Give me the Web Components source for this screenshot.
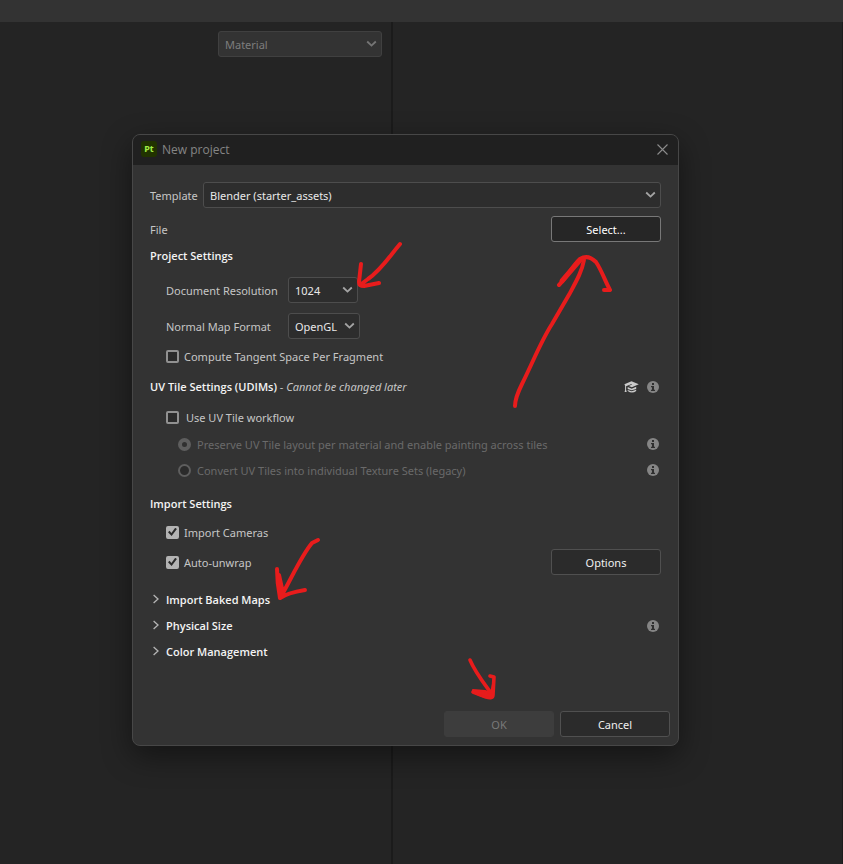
<!DOCTYPE html>
<html lang="en">
<head>
<meta charset="utf-8">
<title>New project</title>
<style>
  html, body { margin: 0; min-height: 100vh; background: #242424; }
  body { font: 11px/16px "Noto Sans", "Open Sans", sans-serif; color: #c6c6c6; }
</style>
</head>
<body>
<app-window></app-window>

<script>
const define = (name, html, setup) => {
  const template = document.createElement('template');
  template.innerHTML = '<style>*{box-sizing:border-box}</style>' + html;
  customElements.define(name, class extends HTMLElement {
    connectedCallback() {
      if (this.shadowRoot) return;
      this.attachShadow({ mode: 'open' }).append(template.content.cloneNode(true));
      if (setup) setup(this, this.shadowRoot);
    }
  });
};

define('ui-select', `
  <style>
    :host { display: flex; align-items: center; min-width: 0; }
    label { flex: none; width: var(--label-width, auto); margin-right: var(--label-gap, 0); padding-top: 2px; white-space: nowrap; }
    label:empty { display: none; }
    .box { position: relative; display: flex; flex: 1; height: 26px; max-width: var(--box-width, none); }
    select { appearance: none; width: 100%; height: 26px; margin: 0; padding: 2px 20px 0 6px; font: inherit;
      color: var(--field-color, #e8e8e8); background: var(--field-bg, #2d2d2d);
      border: 1px solid var(--field-border, #4d4d4d); border-radius: 3px; opacity: 1; }
    svg { position: absolute; right: 5px; top: 7px; width: 11px; height: 11px; pointer-events: none;
      fill: none; stroke: var(--arrow, #a4a4a4); stroke-width: 1.8; }
  </style>
  <label for="s"></label>
  <span class="box"><select id="s"><option></option></select>
    <svg viewBox="0 0 11 11"><path d="M1.2 3.5 5.5 7.6 9.8 3.5"/></svg></span>
`, (host, root) => {
  root.querySelector('label').textContent = host.getAttribute('label') || '';
  root.querySelector('option').textContent = host.getAttribute('value');
  const select = root.querySelector('select');
  select.disabled = host.hasAttribute('disabled');
  if (!host.hasAttribute('label')) select.setAttribute('aria-label', 'Display mode');
});

define('ui-button', `
  <style>
    :host { display: block; flex: none; width: 110px; }
    button { display: block; width: 100%; height: 26px; margin: 0; padding: 2px 0 0; font: inherit; color: #efefef;
      background: #2b2b2b; border: 1px solid #505050; border-radius: 3px; }
    :host([primary]) button { background: #262626; border-color: #787878; color: #fff; }
    button:disabled { background: #3d3d3d; border-color: #3d3d3d; color: #797979; }
  </style>
  <button type="button"><slot></slot></button>
`, (host, root) => { root.querySelector('button').disabled = host.hasAttribute('disabled'); });

define('ui-check', `
  <style>
    :host { display: flex; align-items: center; height: 26px; padding-left: 16px; }
    :host([type=radio]) { padding-left: 28px; color: #6a6a6a; }
    input { appearance: none; flex: none; display: grid; place-items: center; width: 13px; height: 13px;
      margin: 0 5px 0 0; border: 2px solid #919191; border-radius: 2px; background: #2b2b2b; }
    label { padding-top: 2px; }
    :host([wide]) input { margin-right: 7px; }
    input:checked { background: #b3b3b3; border-color: #b3b3b3; }
    input[type=checkbox]:checked::before { content: ""; width: 9px; height: 9px; background: #2b2b2b;
      clip-path: polygon(0 52%, 17% 36%, 38% 60%, 80% 2%, 99% 16%, 40% 94%); }
    input[type=radio] { margin-right: 6px; border-color: #5e5e5e; border-radius: 50%; }
    input[type=radio]:checked { border-width: 4px; background: #303030; }
  </style>
  <input id="i"><label for="i"><slot></slot></label>
`, (host, root) => {
  const input = root.querySelector('input');
  input.type = host.getAttribute('type') || 'checkbox';
  input.checked = host.hasAttribute('checked');
  input.disabled = host.hasAttribute('disabled');
});

define('ui-row', `
  <style>
    :host { display: flex; align-items: center; min-height: 26px; }
    .lead { flex: 1; min-width: 0; }
    .tail { display: flex; align-items: center; gap: 8px; }
    ::slotted(icon-info) { margin: 0 2px 1px 0; }
    ::slotted(icon-learn) { margin-bottom: 1px; }
  </style>
  <div class="lead"><slot></slot></div><div class="tail"><slot name="end"></slot></div>
`);

define('ui-heading', `
  <style>
    :host { display: block; }
    h2 { margin: 0; font: inherit; line-height: 28px; white-space: nowrap; }
    b { font-family: "Open Sans", "Noto Sans", sans-serif; font-weight: 600; color: #f4f4f4; }
  </style>
  <h2><b><slot></slot></b><slot name="note"></slot></h2>
`);

define('ui-disclosure', `
  <style>
    :host { display: block; }
    button { display: flex; align-items: center; gap: 6px; height: 26px; margin: 0; padding: 0; border: 0;
      background: none; font: inherit; font-family: "Open Sans", "Noto Sans", sans-serif; font-weight: 600; color: #f4f4f4; }
    svg { width: 10px; height: 10px; margin-bottom: 2px; fill: none; stroke: #b4b4b4; stroke-width: 1.3; }
  </style>
  <button type="button" aria-expanded="false"><svg viewBox="0 0 10 10"><path d="M3.6 1 8 5 3.6 9"/></svg><slot></slot></button>
`);

define('icon-info', `
  <style>:host,svg{display:block;width:12px;height:12px}</style>
  <svg viewBox="0 0 12 12" role="img" aria-label="Information"><circle cx="6" cy="6" r="6" fill="#858585"/>
    <path fill="#2f2f2f" d="M5 2h2v2H5zM4 5h3v3.7h1V10H4V8.7h1V6.2H4z"/></svg>
`);

define('icon-learn', `
  <style>:host,svg{display:block;width:15px;height:12px}</style>
  <svg viewBox="0 0 15 12" role="img" aria-label="Tutorials" fill="#cbcbcb">
    <path d="M7.5.2 14.8 3.3 7.8 6.3 4.8 5 8 3.6 7.6 2.9 2.6 4.9 2.1 5.2V8.8L2.7 11H.6L1.1 8.8V4.7L.4 3.3z"/>
    <path d="M3.7 6 7.7 7.7 12.2 5.7V8L7.7 9.3 3.7 8zM3.7 9 7.7 10.2 12.2 8.8V10Q8 13 3.7 10z"/></svg>
`);

define('project-dialog', `
  <style>
    :host { display: block; border: 1px solid #474747; border-radius: 8px; background: #333; overflow: hidden;
      box-shadow: 0 10px 30px rgba(0,0,0,.45); }
    header { display: flex; align-items: center; height: 30px; padding: 0 9px 0 8px; background: #202020; color: #858585; }
    .logo { width: 16px; height: 16px; margin-bottom: 2px; border-radius: 3px; background: #213300; color: #a3ef45;
      font: bold 9px/15px "Noto Sans", sans-serif; text-align: center; }
    h1 { flex: 1; margin: 0 0 0 5px; font: 12px/16px "Open Sans", "Noto Sans", sans-serif; }
    .close { display: grid; place-items: center; width: 13px; height: 13px; margin: 0 0 2px; padding: 0; border: 0; background: none; }
    .close svg { display: block; width: 11px; height: 11px; stroke: #8b8b8b; stroke-width: 1.1; }
    main { padding: 17px 17px 0; }
    .file { padding-top: 2px; display: block; }
    .indent { padding-left: 16px; --label-width: 122px; }
    .template { --label-width: 45px; --label-gap: 8px; }
    .resolution { margin-top: 7px; --box-width: 70px; }
    .format { margin-top: 10px; --box-width: 72px; }
    .gap1 { margin-top: 1px; }
    .gap3 { margin-top: 3px; }
    .gap4 { margin-top: 4px; }
    .gap7 { margin-top: 7px; }
    .gap8 { margin-top: 8px; }
    .gap12 { margin-top: 12px; }
    footer { display: flex; justify-content: flex-end; gap: 6px; padding: 46px 8px 8px; }
  </style>
  <header>
    <span class="logo">Pt</span><h1>New project</h1>
    <button class="close" type="button" aria-label="Close"><svg viewBox="0 0 11 11"><path d="M.5.5l10 10M10.5.5l-10 10"/></svg></button>
  </header>
  <main>
    <ui-select class="template" label="Template" value="Blender (starter_assets)"></ui-select>
    <ui-row class="gap8"><span class="file">File</span><ui-button slot="end" primary>Select...</ui-button></ui-row>
    <ui-heading>Project Settings</ui-heading>
    <ui-select class="indent resolution" label="Document Resolution" value="1024"></ui-select>
    <ui-select class="indent format" label="Normal Map Format" value="OpenGL"></ui-select>
    <ui-check class="gap4">Compute Tangent Space Per Fragment</ui-check>
    <ui-row class="gap4"><ui-heading>UV Tile Settings (UDIMs)<span slot="note">&nbsp;- <i>Cannot be changed later</i></span></ui-heading>
      <icon-learn slot="end"></icon-learn><icon-info slot="end"></icon-info></ui-row>
    <ui-check class="gap3" wide>Use UV Tile workflow</ui-check>
    <ui-row class="gap1"><ui-check type="radio" checked disabled>Preserve UV Tile layout per material and enable painting across tiles</ui-check><icon-info slot="end"></icon-info></ui-row>
    <ui-row><ui-check type="radio" disabled>Convert UV Tiles into individual Texture Sets (legacy)</ui-check><icon-info slot="end"></icon-info></ui-row>
    <ui-heading class="gap7">Import Settings</ui-heading>
    <ui-check class="gap1" checked>Import Cameras</ui-check>
    <ui-row class="gap4"><ui-check checked>Auto-unwrap</ui-check><ui-button slot="end">Options</ui-button></ui-row>
    <ui-row class="gap12"><ui-disclosure>Import Baked Maps</ui-disclosure></ui-row>
    <ui-row><ui-disclosure>Physical Size</ui-disclosure><icon-info slot="end"></icon-info></ui-row>
    <ui-row><ui-disclosure>Color Management</ui-disclosure></ui-row>
  </main>
  <footer><ui-button disabled>OK</ui-button><ui-button>Cancel</ui-button></footer>
`);

define('ink-arrows', `
  <style>
    :host { position: absolute; left: 0; top: 0; pointer-events: none; }
    svg { display: block; fill: none; stroke: #e81c1c; stroke-width: 4; stroke-linecap: round; stroke-linejoin: round; }
  </style>
  <svg width="700" height="720" viewBox="0 0 700 720" aria-hidden="true">
    <path d="M400 244C389 257 381 270 368 279L360 285M361 264 359 282Q359 286 364 286L379 283"/>
    <path d="M515 406C515 401 518 392 522 384C533 362 541 341 552 324L570 293C577 280 582 271 584 260"/>
    <path d="M559 285C567 277 573 265 580 259Q588 254 596 262C602 271 605 281 610 290L604 290"/>
    <path d="M562 281 580 260 574 267" stroke-width="5"/>
    <path d="M318 540 312 543C302 555 294 573 283 593L280 598M277 569C277 580 278 588 280 598Q287 593 305 590M279 575 283 593"/>
    <path d="M470 660C475 672 483 682 491 693M490 676 494 677 493 695Q493 699 486 697L473 692" stroke-width="3.6"/>
    <path fill="#e81c1c" stroke-width="2" d="M473 690 485 691 491 693 493 684 493 697Q485 699 473 692z"/>
  </svg>
`);

define('app-window', `
  <style>
    :host { position: relative; display: flex; flex-direction: column; min-height: 100vh; }
    .toolbar { height: 22px; background: #333; }
    .panes { flex: 1; display: grid; grid-template-columns: 391fr 452fr; }
    .left { display: flex; justify-content: flex-end; align-items: flex-start; padding: 9px 9px 0 0; }
    .left ui-select { width: 164px; --field-bg: #333; --field-border: #404040; --field-color: #7d7d7d; --arrow: #757575; }
    .right { border-left: 2px solid #1b1b1b; border-right: 1px solid #1b1b1b; }
    .modal { position: absolute; inset: 0 0 auto; padding: 134px 164px 0 132px; }
  </style>
  <div class="toolbar"></div>
  <div class="panes"><div class="left"><ui-select value="Material" disabled></ui-select></div><div class="right"></div></div>
  <div class="modal"><project-dialog role="dialog" aria-label="New project"></project-dialog></div>
  <ink-arrows></ink-arrows>
`);
</script>
</body>
</html>
